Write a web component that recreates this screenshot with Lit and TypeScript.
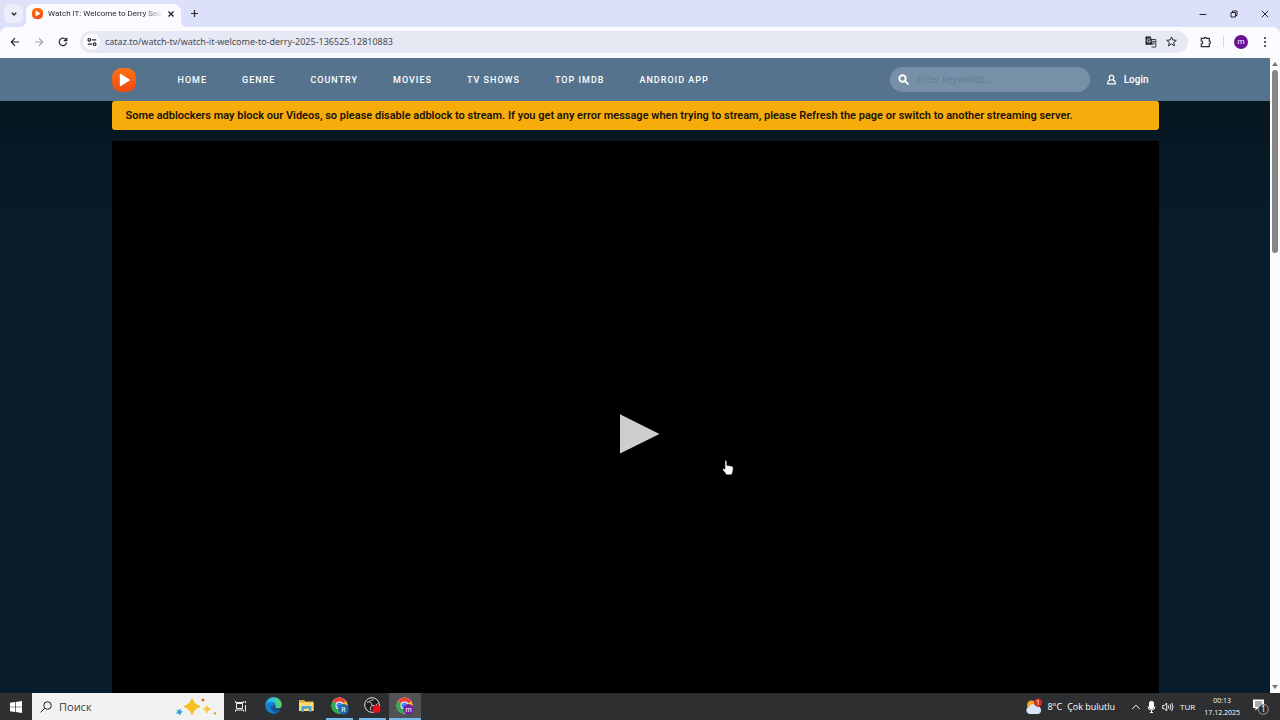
import { LitElement, html, css, svg } from "lit";
import { customElement, property } from "lit/decorators.js";

const playTile = html`<svg class="tile" viewBox="0 0 24 24" aria-hidden="true">
  <defs>
    <linearGradient id="tile-fill" x1="0" y1="0" x2="0" y2="1">
      <stop offset="0" stop-color="#ff7216"></stop>
      <stop offset="1" stop-color="#ee4a0c"></stop>
    </linearGradient>
  </defs>
  <path d="M12 0C21 0 24 3 24 12S21 24 12 24 0 21 0 12 3 0 12 0Z" fill="url(#tile-fill)"></path>
  <path d="M7.800 6.200v11.600q0 .8.8.4l9-5.600q.8-.6 0-1.200l-9-5.600q-.8-.4-.8.4Z" fill="#fff"></path>
</svg>`;

const chromeMark = (letter: string, badge: string) => html`<svg width="18" height="18" viewBox="0 0 18 18" aria-hidden="true">
  <circle cx="8.500" cy="8.500" r="8" fill="#fff"></circle>
  <path d="M8.500 8.500 1.600 4.500A8 8 0 0 1 15.400 4.500Z" fill="#e94336"></path>
  <path d="M8.500 8.500 15.400 4.500A8 8 0 0 1 8.500 16.500Z" fill="#fbbc05"></path>
  <path d="M8.500 8.500V16.500A8 8 0 0 1 1.600 4.500Z" fill="#2da94f"></path>
  <circle cx="8.500" cy="8.500" r="4" fill="#fff"></circle>
  <circle cx="8.500" cy="8.500" r="3.100" fill="#4285f4"></circle>
  <circle cx="12.500" cy="12.300" r="5.200" fill=${badge}></circle>
  <text x="12.500" y="14.800" text-anchor="middle" font-size="7" fill="#fff" font-family="Roboto, sans-serif">${letter}</text>
</svg>`;

@customElement("browser-chrome")
class BrowserChrome extends LitElement {
  @property() name = "";
  @property() address = "";

  static styles = css`
    :host {
      display: block;
      background: #dce0f8;
      font-family: "Noto Sans", "Open Sans", sans-serif;
      color: #26282e;
    }
    button {
      border: 0;
      padding: 0;
      background: none;
      color: inherit;
      font: inherit;
      display: grid;
      place-items: center;
    }
    svg {
      display: block;
      fill: none;
      stroke: currentColor;
      stroke-width: 1.2;
    }
    .strip {
      display: flex;
      height: 27px;
      align-items: center;
      padding-left: 4px;
    }
    .search-tabs {
      width: 19px;
      height: 19px;
      border-radius: 6px;
      background: #eceefb;
    }
    .search-tabs svg,
    .close svg {
      stroke-width: 1.4;
    }
    .tab {
      position: relative;
      align-self: flex-end;
      box-sizing: border-box;
      width: 155px;
      height: 23px;
      margin-left: 3px;
      padding: 0 5px 4px 6px;
      display: flex;
      align-items: center;
      gap: 5px;
      border-radius: 7px 7px 0 0;
      background: #fafaff;
    }
    .tab::before,
    .tab::after {
      content: "";
      position: absolute;
      bottom: 0;
      width: 6px;
      height: 6px;
    }
    .tab::before {
      right: 100%;
      background: radial-gradient(circle at 0 0, transparent 6px, #fafaff 6px);
    }
    .tab::after {
      left: 100%;
      background: radial-gradient(circle at 100% 0, transparent 6px, #fafaff 6px);
    }
    .tile {
      width: 11px;
      height: 11px;
      flex: none;
      stroke: none;
    }
    .name {
      flex: 1;
      white-space: nowrap;
      font-family: Roboto, "Noto Sans", sans-serif;
      font-size: 8px;
      line-height: 12px;
      mask-image: linear-gradient(to right, #000 84%, rgba(0, 0, 0, 0.15));
    }
    .close {
      width: 10px;
      height: 16px;
    }
    .new-tab {
      width: 16px;
      height: 19px;
      margin-left: 5px;
    }
    .window {
      margin-left: auto;
      display: flex;
    }
    .window button {
      width: 31px;
      height: 26px;
    }
    .window svg {
      stroke-width: 1;
    }
    .bar {
      display: flex;
      height: 31px;
      box-sizing: border-box;
      align-items: center;
      padding: 0 8px 2px 5px;
      border-radius: 7px 7px 0 0;
      background: #fafaff;
    }
    .nav {
      width: 20px;
      height: 20px;
      margin-right: 4px;
    }
    .off {
      color: #a4a5ab;
    }
    .omnibox {
      flex: 1;
      height: 22px;
      margin-left: 3px;
      padding: 0 6px 0 3px;
      display: flex;
      align-items: center;
      border-radius: 11px;
      background: #e6e8f4;
    }
    .site {
      width: 17px;
      height: 17px;
      border-radius: 50%;
      background: #fafaff;
    }
    .omnibox input {
      flex: 1;
      min-width: 0;
      border: 0;
      outline: 0;
      padding: 0 0 0 5px;
      background: none;
      color: #484a52;
      font: inherit;
      font-size: 9px;
      line-height: 16px;
    }
    .mini {
      width: 21px;
      height: 20px;
    }
    .ext {
      width: 24px;
      height: 20px;
      margin-left: 6px;
    }
    .rule {
      width: 1px;
      height: 11px;
      margin: 0 10px 0 5px;
      background: #d5d8ea;
    }
    .me {
      width: 14px;
      height: 14px;
      border-radius: 50%;
      background: #6a1292;
      color: #fff;
      font-family: Roboto, sans-serif;
      font-size: 8px;
      line-height: 12px;
    }
    .more {
      width: 14px;
      height: 20px;
      margin-left: 10px;
    }
  `;

  render() {
    return html`
      <div class="strip">
        <button class="search-tabs" aria-label="Search tabs">
          <svg width="8" height="8" viewBox="0 0 8 8"><path d="M1.800 2.800 4 5 6.200 2.800"></path></svg>
        </button>
        <div class="tab">
          ${playTile}
          <span class="name">${this.name}</span>
          <button class="close" aria-label="Close tab">
            <svg width="8" height="8" viewBox="0 0 8 8"><path d="M1.500 1.500l5 5M6.500 1.500l-5 5"></path></svg>
          </button>
        </div>
        <button class="new-tab" aria-label="New tab">
          <svg width="9" height="9" viewBox="0 0 9 9"><path d="M4.500 1v7M1 4.500h7"></path></svg>
        </button>
        <div class="window">
          <button aria-label="Minimize"><svg width="8" height="8" viewBox="0 0 8 8"><path d="M.5 4.500h7"></path></svg></button>
          <button aria-label="Restore">
            <svg width="8" height="8" viewBox="0 0 8 8"><path d="M1 2.500h4.500V7H1ZM2.500 2.500V1H7v4.500H5.500"></path></svg>
          </button>
          <button aria-label="Close"><svg width="8" height="8" viewBox="0 0 8 8"><path d="M.8.8l6.400 6.400M7.200.8.8 7.200"></path></svg></button>
        </div>
      </div>
      <div class="bar">
        <button class="nav" aria-label="Back">
          <svg width="10" height="10" viewBox="0 0 10 10"><path d="M9 5H1.500M5 1.200 1.300 5 5 8.800"></path></svg>
        </button>
        <button class="nav off" aria-label="Forward">
          <svg width="10" height="10" viewBox="0 0 10 10"><path d="M1 5h7.500M5 1.200 8.700 5 5 8.800"></path></svg>
        </button>
        <button class="nav" aria-label="Reload">
          <svg width="10" height="10" viewBox="0 0 10 10"><path d="M8.600 5.600A3.700 3.700 0 1 1 7.800 2.500L8.600 3.400M8.800.8v2.900H5.800"></path></svg>
        </button>
        <div class="omnibox">
          <button class="site" aria-label="Site information">
            <svg width="10" height="10" viewBox="0 0 10 10">
              <circle cx="2.300" cy="2.800" r="1.300"></circle><path d="M4.800 2.800h4.400M.8 7.200h4.400"></path><circle cx="7.700" cy="7.200" r="1.300"></circle>
            </svg>
          </button>
          <input aria-label="Address" .value=${this.address} />
          <button class="mini" aria-label="Translate">
            <svg width="12" height="12" viewBox="0 0 12 12">
              <path d="M5.500 3.500h5.300v7.500H6.500" stroke-width=".9"></path>
              <path d="M.8.8h4.700L7.500 8.500H.8Z" fill="currentColor" stroke-width=".6"></path>
              <path d="M5.200 3.600A1.700 1.700 0 1 0 5.400 5H4" stroke="#fff" stroke-width=".8"></path>
              <path d="M7 5.500h3.200M8.600 4.600v.9M9.600 5.600Q9 7.600 7.500 8.500M8 6.500l1.800 2" stroke-width=".7"></path>
            </svg>
          </button>
          <button class="mini" aria-label="Bookmark">
            <svg width="11" height="11" viewBox="0 0 11 11">
              <path d="M5.500.9 6.900 4l3.400.3-2.600 2.200.8 3.300-3-1.800-3 1.800.8-3.300L.7 4.300 4.100 4Z" stroke-width="1"></path>
            </svg>
          </button>
        </div>
        <button class="ext" aria-label="Extensions">
          <svg width="12" height="12" viewBox="0 0 12 12">
            <path d="M1.300 2.300H4.200a1.200 1 0 0 1 2.400 0H9.300V5.200a1.100 1.200 0 0 1 0 2.400V10.600H1.300V8a1.500 1.500 0 0 0 0-3Z"></path>
          </svg>
        </button>
        <span class="rule"></span>
        <button class="me" aria-label="Profile">m</button>
        <button class="more" aria-label="Menu">
          <svg width="4" height="12" viewBox="0 0 4 12">
            <g fill="currentColor" stroke="none"><circle cx="2" cy="2" r="1"></circle><circle cx="2" cy="6" r="1"></circle><circle cx="2" cy="10" r="1"></circle></g>
          </svg>
        </button>
      </div>
    `;
  }
}

@customElement("stream-page")
class StreamPage extends LitElement {
  static styles = css`
    :host {
      display: block;
      overflow: hidden;
      background: linear-gradient(to bottom, #06151f, #081c2b 30%);
      font-family: Roboto, sans-serif;
      color: #fff;
    }
    .wrap {
      width: calc(100% - 48px);
      max-width: 1047px;
      margin: 0 auto;
    }
    header {
      background: #56738d;
    }
    header .wrap {
      display: flex;
      align-items: center;
      height: 43px;
    }
    .tile {
      display: block;
      width: 24px;
      height: 24px;
    }
    nav {
      display: flex;
      gap: 35px;
      margin-left: 42px;
    }
    a {
      color: inherit;
      text-decoration: none;
    }
    nav a {
      font-size: 9px;
      line-height: 16px;
      font-weight: 500;
      letter-spacing: 1px;
      white-space: nowrap;
    }
    .search {
      display: flex;
      align-items: center;
      gap: 8px;
      box-sizing: border-box;
      width: 200px;
      height: 25px;
      margin-left: auto;
      padding: 0 8px;
      border-radius: 13px;
      background: #7890a7;
    }
    .search svg,
    .login svg {
      display: block;
      flex: none;
    }
    .search input {
      flex: 1;
      min-width: 0;
      border: 0;
      outline: 0;
      padding: 0;
      background: none;
      color: #fff;
      font: inherit;
      font-size: 10px;
      line-height: 16px;
    }
    .search input::placeholder {
      color: #667f97;
      opacity: 1;
    }
    .login {
      display: flex;
      align-items: center;
      gap: 8px;
      margin: 0 10px 0 17px;
      font-size: 10px;
      line-height: 16px;
      font-weight: 500;
    }
    .notice {
      box-sizing: border-box;
      margin-bottom: 11px;
      padding: 6px 14px;
      border-radius: 3px;
      background: #f6ac0a;
      color: #1b1408;
      font-size: 11px;
      line-height: 17px;
      font-weight: 600;
    }
    .player {
      display: grid;
      place-items: center;
      box-sizing: border-box;
      padding-bottom: 2px;
      aspect-ratio: 16 / 9;
      background: #000;
    }
    .play {
      border: 0;
      padding: 0;
      background: none;
    }
    .play svg {
      display: block;
    }
  `;

  links = ["HOME", "GENRE", "COUNTRY", "MOVIES", "TV SHOWS", "TOP IMDB", "ANDROID APP"];

  render() {
    return html`
      <header>
        <div class="wrap">
          <a href="#" aria-label="Front page">${playTile}</a>
          <nav>${this.links.map((l) => html`<a href="#">${l}</a>`)}</nav>
          <label class="search">
            <svg width="11" height="11" viewBox="0 0 11 11" fill="none" stroke="#fff" stroke-width="1.900" stroke-linecap="round">
              <circle cx="4.500" cy="4.500" r="3.200"></circle><path d="M7.200 7.200 9.800 9.800"></path>
            </svg>
            <input type="text" aria-label="Search" placeholder="Enter keywords..." />
          </label>
          <a class="login" href="#">
            <svg width="9" height="11" viewBox="0 0 9 11" fill="none" stroke="#fff" stroke-width="1.200">
              <circle cx="4.500" cy="3.700" r="2.300"></circle><path d="M2.900 6.200Q.8 6.800.8 8.500V9.800H8.200V8.500Q8.200 6.800 6.100 6.200"></path>
            </svg>
            Login
          </a>
        </div>
      </header>
      <div class="wrap">
        <div class="notice">
          Some adblockers may block our Videos, so please disable adblock to stream. If you get any error message when trying to
          stream, please Refresh the page or switch to another streaming server.
        </div>
        <div class="player">
          <button class="play" aria-label="Play">
            <svg width="50" height="40" viewBox="0 0 50 40"><path d="M10 .2V39.600L49.500 19.900Z" fill="#cecece"></path></svg>
          </button>
        </div>
      </div>
    `;
  }
}

@customElement("task-bar")
class TaskBar extends LitElement {
  static styles = css`
    :host {
      display: flex;
      height: 27px;
      background: #2d2f31;
      color: #fff;
      font-family: "Open Sans", "Noto Sans", sans-serif;
      font-size: 9px;
      line-height: 14px;
    }
    button {
      border: 0;
      padding: 0;
      background: none;
      color: inherit;
      font: inherit;
      display: grid;
      place-items: center;
      box-sizing: border-box;
      flex: none;
    }
    svg {
      display: block;
    }
    .start {
      width: 32px;
    }
    .search {
      display: flex;
      align-items: center;
      gap: 7px;
      box-sizing: border-box;
      width: 192px;
      padding: 0 7px 0 8px;
      background: #f2f2f2;
      color: #333;
    }
    .search input {
      flex: 1;
      min-width: 0;
      border: 0;
      outline: 0;
      padding: 0;
      background: none;
      font: inherit;
      font-size: 11px;
    }
    .search input::placeholder {
      color: #3c3c3c;
      opacity: 1;
    }
    .apps {
      display: flex;
    }
    .apps button {
      width: 33px;
      border-bottom: 2px solid transparent;
    }
    .apps .open {
      width: 27px;
      margin: 0 3px;
      border-bottom-color: #76b9ed;
    }
    .apps .active {
      width: 32px;
      margin: 0;
      background: #505254;
      border-bottom-color: #76b9ed;
    }
    .tray {
      display: flex;
      align-items: center;
      margin-left: auto;
    }
    .weather {
      display: flex;
      align-items: center;
      gap: 5px;
      margin-right: 16px;
    }
    .sys {
      display: flex;
      align-items: center;
      gap: 6px;
    }
    .lang {
      font-size: 8px;
    }
    .clock {
      margin: 0 12px 0 9px;
      text-align: center;
      font-size: 7px;
      line-height: 12px;
    }
    .notes {
      margin-right: 11px;
    }
  `;

  render() {
    return html`
      <button class="start" aria-label="Start">
        <svg width="12" height="12" viewBox="0 0 12 12" fill="#fff">
          <path d="M0 1.700 5 1V5.700H0ZM5.700.9 12 0V5.700H5.700ZM0 6.300H5V11L0 10.300ZM5.700 6.300H12V12L5.700 11.100Z"></path>
        </svg>
      </button>
      <label class="search">
        <svg width="12" height="12" viewBox="0 0 12 12" fill="none" stroke="#222" stroke-width="1">
          <circle cx="7.500" cy="4.500" r="3.800"></circle><path d="M4.800 7.200.6 11.400"></path>
        </svg>
        <input type="text" aria-label="Поиск" placeholder="Поиск" />
        <svg width="42" height="20" viewBox="0 0 42 20">
          <path d="M17 2.500Q18.800 8 24 9.500 18.800 11 17 16.500 15.200 11 10 9.500 15.200 8 17 2.500Z" fill="#f6bf26" stroke="#f6bf26" stroke-width="2" stroke-linejoin="round"></path>
          <path d="M32 8.500Q32.600 11.500 36 12 32.600 12.600 32 16 31.300 12.600 28 12 31.300 11.500 32 8.500Z" fill="#f8c433" stroke="#f8c433" stroke-width=".6"></path>
          <path d="M5.200 12 5.500 14 7.500 14.800 5.800 15.800 5 18 3.700 16.300 1.500 16.500 2.700 14.800 2 13 4 13.500Z" fill="#2f9fda" stroke="#2f9fda" stroke-width=".5"></path>
          <circle cx="28" cy="3" r="1.500" fill="#c9732d"></circle>
          <circle cx="40" cy="16.300" r="1.300" fill="#d5ad45"></circle>
        </svg>
      </label>
      <div class="apps">
        <button aria-label="Task view">
          <svg width="12" height="12" viewBox="0 0 12 12" fill="none" stroke="#eee" stroke-width="1">
            <path d="M1.500 3.500h6v5h-6ZM.5 1v1.500h8V1M.5 11.500V10h8v1.500M10.500 5v6.500M10.500 1v2"></path>
          </svg>
        </button>
        <button aria-label="Edge">
          <svg width="17" height="17" viewBox="0 0 17 17">
            <defs>
              <linearGradient id="edge-top" x1="0" x2="1"><stop offset="0" stop-color="#1da7e8"></stop><stop offset=".5" stop-color="#35c3d6"></stop><stop offset="1" stop-color="#62d948"></stop></linearGradient>
            </defs>
            <circle cx="8.500" cy="8.500" r="8.200" fill="#1580cf"></circle>
            <path d="M.4 7.800C1 3 4.600.3 8.600.3 13.400.3 16.700 3.600 16.700 7.400 16.700 9.800 15 11.200 12.800 11.200 10.400 11.200 9.700 10.200 10.300 9.300 11.600 7.300 9.700 5 6.500 5 3.800 5 1.400 6 .4 7.800Z" fill="url(#edge-top)"></path>
            <path d="M6.600 8C5 10.500 6.500 15 11 15.300 13 15.400 14.500 14.500 15.500 13.200 13.500 14.200 9.500 13.500 9 10.300Z" fill="#1653a0"></path>
            <path d="M8.500 8.300C9.500 7.600 10.700 8.500 10.100 9.800 10 11.600 13.500 12.600 16.500 10.800L15.500 13Q9.500 14 8.500 8.300Z" fill="#2d2f31"></path>
          </svg>
        </button>
        <button aria-label="File Explorer">
          <svg width="15" height="13" viewBox="0 0 15 13">
            <path d="M0 1H5L6.500 2.500H14.500V12H0Z" fill="#e8a92c"></path>
            <path d="M0 3.500H14.500V12H0Z" fill="#fbdc78"></path>
            <path d="M2.500 12.800V7H12.500V12.800H10V9.800H5V12.800Z" fill="#4aa3d8"></path>
          </svg>
        </button>
        <button class="open" aria-label="Chrome, R">${chromeMark("R", "#1769aa")}</button>
        <button class="open" aria-label="OBS Studio">
          <svg width="17" height="17" viewBox="0 0 17 17">
            <circle cx="8" cy="8" r="7.300" fill="#1d1c20" stroke="#e4e4e4" stroke-width="1"></circle>
            <path d="M3 5.500Q5.500 3.800 7.500 6.200L8 8.500M13.500 6.500Q12.500 9.300 8 8.500M7 13.500Q4.800 11 8 8.500M9.500 2.700Q5.500 3 5 5" fill="none" stroke="#c4c4c4" stroke-width="1"></path>
            <circle cx="12.500" cy="12" r="4" fill="#ea0f17"></circle>
          </svg>
        </button>
        <button class="active" aria-label="Chrome, m">${chromeMark("m", "#7a1fa2")}</button>
      </div>
      <div class="tray">
        <div class="weather">
          <svg width="17" height="17" viewBox="0 0 17 17">
            <circle cx="6.500" cy="7" r="4.500" fill="#f5a623"></circle>
            <path d="M4.500 16A3.700 3.700 0 0 1 4 8.800 4.500 4.500 0 0 1 12 8.300 3.900 3.900 0 0 1 13 16Z" fill="#d9e4fa"></path>
            <circle cx="13" cy="4.500" r="4" fill="#d02a25"></circle>
            <text x="13" y="7" text-anchor="middle" font-size="7" fill="#fff" font-family="Noto Sans, sans-serif">1</text>
          </svg>
          <span>8°C</span>
          <span>Çok bulutlu</span>
        </div>
        <div class="sys">
          <svg width="10" height="6" viewBox="0 0 10 6" fill="none" stroke="#fff"><path d="M1.200 5 5 1.300 8.800 5"></path></svg>
          <svg width="9" height="12" viewBox="0 0 9 12" fill="none" stroke="#fff">
            <rect x="2.500" y=".5" width="4" height="7" rx="1.500" fill="#fff"></rect><path d="M1 5.500Q1 9 4.500 9T8 5.500M4.500 9v2.500M3 11.500h3"></path>
          </svg>
          <svg width="12" height="10" viewBox="0 0 12 10" fill="none" stroke="#fff" stroke-width=".9">
            <path d="M.7 3.500H2.300L4.700 1V9L2.300 6.500H.7ZM6.300 3.500Q7.300 5 6.300 6.500M8 2.200Q9.800 5 8 7.800M9.700 1Q12.300 5 9.700 9"></path>
          </svg>
          <span class="lang">TUR</span>
        </div>
        <div class="clock"><div>00:13</div><div>17.12.2025</div></div>
        <svg class="notes" width="17" height="17" viewBox="0 0 17 17">
          <path d="M1 1.500H12V10H6L3.500 12.500V10H1Z" fill="#fff"></path>
          <path d="M3 4h7M3 6h7M3 8h4" stroke="#2d2f31" stroke-width=".8"></path>
          <circle cx="11.300" cy="11.300" r="5" fill="#2d2f31" stroke="#bbb" stroke-width=".8"></circle>
          <text x="11.300" y="14.300" text-anchor="middle" font-size="8" fill="#fff" font-family="Noto Sans, sans-serif">1</text>
        </svg>
      </div>
    `;
  }
}

@customElement("app-root")
class AppRoot extends LitElement {
  static styles = css`
    :host {
      display: flex;
      flex-direction: column;
      height: 100vh;
      overflow: hidden;
      position: relative;
    }
    browser-chrome,
    task-bar {
      flex: none;
    }
    .view {
      flex: 1;
      min-height: 0;
      display: flex;
    }
    stream-page {
      flex: 1;
      min-width: 0;
    }
    .scroll {
      width: 10px;
      box-sizing: border-box;
      padding: 4px 2px;
      display: flex;
      flex-direction: column;
      align-items: center;
      gap: 4px;
      background: #fbfbfb;
    }
    .track {
      flex: 1;
      align-self: stretch;
    }
    .thumb {
      height: 30%;
      border-radius: 3px;
      background: #858585;
    }
    svg {
      display: block;
    }
    .pointer {
      position: absolute;
      left: 722px;
      top: 460px;
    }
  `;

  render() {
    const arrow = (d: string) => html`<svg width="6" height="4" viewBox="0 0 6 4">${svg`<path d=${d} fill="#777"></path>`}</svg>`;
    return html`
      <browser-chrome
        name="Watch IT: Welcome to Derry Sec"
        address="cataz.to/watch-tv/watch-it-welcome-to-derry-2025-136525.12810883"
      ></browser-chrome>
      <div class="view">
        <stream-page></stream-page>
        <div class="scroll">
          ${arrow("M0 4 3 0 6 4Z")}
          <div class="track"><div class="thumb"></div></div>
          ${arrow("M0 0 3 4 6 0Z")}
        </div>
      </div>
      <task-bar></task-bar>
      <svg class="pointer" width="12" height="16" viewBox="0 0 12 16" aria-hidden="true">
        <path d="M3 1Q3.900-.2 4.800 1V5.300L10 6.300Q11.300 6.700 11.200 8.200 11 12 9.600 14.800H4.300Q3.500 12.800 .8 10 .2 8.600 1.500 8.500L3 9.300Z" fill="#fff" stroke="#111" stroke-width=".5"></path>
      </svg>
    `;
  }
}
